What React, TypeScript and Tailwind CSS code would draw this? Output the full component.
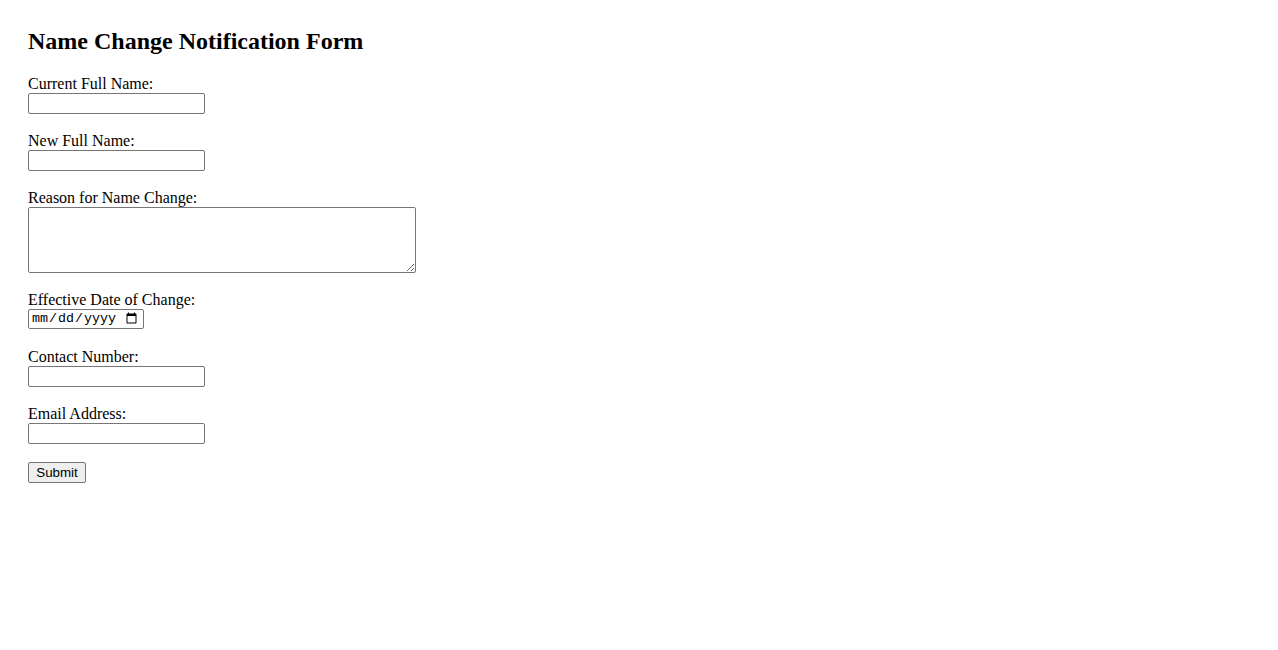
import React from "react";

const inputCls =
  "block w-[177px] h-[21px] border border-[#767676] rounded-[2px] px-[2px] py-[1px] bg-white text-[13.33px] font-['Liberation_Sans',sans-serif] text-black outline-none";
const labelCls = "block text-[16px] leading-[18px]";

export default function App() {
  return (
    <div className="min-h-[650px] bg-white text-black font-['Liberation_Serif',serif] pl-[28px] pt-[27px]">
      <h2 className="text-[24px] leading-[28px] font-bold mb-[20px]">Name Change Notification Form</h2>
      <form className="flex flex-col items-start" onSubmit={(e) => e.preventDefault()}>
        <label className={labelCls}>Current Full Name:</label>
        <input type="text" className={inputCls + " mb-[18px]"} />

        <label className={labelCls}>New Full Name:</label>
        <input type="text" className={inputCls + " mb-[18px]"} />

        <label className={labelCls}>Reason for Name Change:</label>
        <textarea className="block w-[388px] h-[66px] border border-[#767676] rounded-[2px] px-[2px] py-[1px] bg-white text-[13.33px] font-['Liberation_Mono',monospace] mb-[18px] resize" />

        <label className={labelCls}>Effective Date of Change:</label>
        <input
          type="date"
          className="block w-[116px] h-[20px] border border-[#767676] rounded-[2px] pl-[2px] pr-[3px] bg-white text-[13.33px] leading-[16px] font-['Liberation_Mono',monospace] text-black mb-[19px]"
        />

        <label className={labelCls}>Contact Number:</label>
        <input type="tel" className={inputCls + " mb-[18px]"} />

        <label className={labelCls}>Email Address:</label>
        <input type="email" className={inputCls + " mb-[18px]"} />

        <button
          type="submit"
          className="w-[58px] h-[21px] border border-[#767676] rounded-[2px] bg-[#efefef] text-[13.33px] leading-[15px] font-['Liberation_Sans',sans-serif] text-black px-[6px]"
        >
          Submit
        </button>
      </form>
    </div>
  );
}
